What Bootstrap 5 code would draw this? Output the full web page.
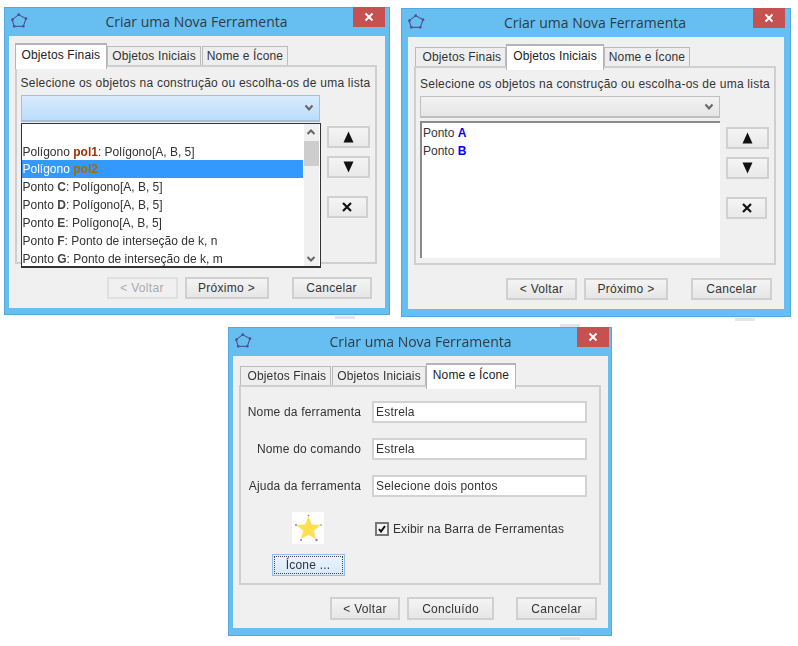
<!DOCTYPE html>
<html lang="en">

<head>
    <meta charset="UTF-8">
    <meta name="viewport" content="width=device-width, initial-scale=1.0">
    <title>Criar uma Nova Ferramenta</title>
    <link href="https://cdn.jsdelivr.net/npm/bootstrap@5.3.0/dist/css/bootstrap.min.css" rel="stylesheet">
    <style>
        body {
            background-color: #fff;
            font-family: "Liberation Sans", Arial, sans-serif;
            font-size: 12px;
            letter-spacing: .2px;
            color: #333;
        }

        .desk {
            position: relative;
            width: 798px;
            height: 646px;
            overflow: hidden;
            filter: blur(.3px);
        }

        .tool-win {
            position: absolute;
            background: #67bff1;
            border: 1px solid #55a8dc;
        }

        #win1 { left: 4px; top: 7px; width: 386px; height: 308px; }
        #win2 { left: 401px; top: 8px; width: 390px; height: 309px; }
        #win3 { left: 228px; top: 327px; width: 384px; height: 309px; }

        #win1 .win-client { margin-left: 3.5px; }
        #win2 .win-client { margin-left: 6px; }
        #win3 .win-client { margin-left: 4px; width: 375px; }

        /* restos de outras janelas atras das capturas */
        .tick-mark {
            position: absolute;
            width: 20px;
            height: 3px;
            background: #e4e4e4;
        }

        #tick1 { left: 335px; top: 316px; }
        #tick2 { left: 735px; top: 318px; }
        #tick3 { left: 560px; top: 324px; }
        #tick4 { left: 560px; top: 637px; }

        .win-title {
            height: 28px;
        }

        .win-icon {
            margin: 5px 0 0 6px;
        }

        .win-name {
            font-family: "Open Sans", sans-serif;
            font-size: 14px;
            letter-spacing: 0;
            line-height: 28px;
            color: #2f3c45;
            padding: 0 6px 0 17px;
        }

        .win-close {
            width: 32px;
            height: 20px;
            margin-right: 4px;
            margin-top: -1px;
            background: #c75050;
        }

        #win2 .win-close { margin-right: 5px; }
        #win3 .win-close { margin-right: 2px; }

        .win-client {
            width: 376px;
            height: 272px;
            background: #f0f0f0;
            padding-top: 7px;
        }

        .tool-tabs {
            border: 0;
            padding-left: 1px;
            height: 22px;
            align-items: flex-end;
            margin-left: 6px;
            flex-wrap: nowrap;
        }

        .tool-tabs .nav-link {
            height: 19px;
            padding: 0 4px;
            margin: 0 1px 0 0;
            line-height: 19px;
            letter-spacing: .14px;
            color: #333;
            background: #eee;
            border: 1px solid #bbb;
            border-bottom: 0;
            border-radius: 0;
            white-space: nowrap;
        }

        .tool-tabs .nav-item:first-child .nav-link:not(.active) {
            padding-left: 6.5px;
        }

        .tool-tabs .nav-link.active {
            height: 26px;
            padding: 2px 6px 0;
            margin: 0 0 -4px -1px;
            line-height: 17px;
            color: #222;
            background: #fff;
            position: relative;
            z-index: 2;
            border-color: #b4b4b4;
            border-width: 2px 1px 0;
        }

        .tab-box {
            margin-left: 6px;
            width: 362px;
            height: 199px;
            border: 2px solid #cfcfcf;
            padding: 8px 4px 0;
        }

        .pick-label {
            height: 16px;
            line-height: 16px;
            margin-bottom: 4px;
            letter-spacing: .235px;
            white-space: nowrap;
        }

        .pick-col {
            width: 299.5px;
            position: relative;
        }

        .pick-combo {
            height: 22px;
            border: 1px solid #c0c0c0;
            border-width: 1px 1px 2px;
            background: linear-gradient(#f2f2f2, #e6e6e6);
            padding-right: 5px;
        }

        #win1 .pick-combo {
            height: 27px;
            background: linear-gradient(#d9ebfc, #bcdcfb);
            border-color: #a9bfd4;
        }

        .pick-drop {
            position: absolute;
            top: 28px;
            left: 0;
            width: 300px;
            height: 145px;
            border: 1px solid #333;
            border-width: 1px 1px 2px;
            background: #fff;
            z-index: 3;
        }

        .drop-rows {
            padding: 1px 0 0;
            flex: 1;
            min-width: 0;
        }

        .drop-rows .list-group-item {
            height: 18px;
            line-height: 18px;
            padding: 0 1px;
            border: 0;
            border-radius: 0;
            background: transparent;
            color: #333;
            letter-spacing: 0;
            white-space: nowrap;
        }

        .drop-rows .list-group-item.active {
            background: #3399ff;
            color: #fff;
            width: 281px;
        }

        .drop-rows b { color: #444; }
        .drop-rows .obj-red { color: #993300; }
        .drop-rows .obj-brown { color: #a86a00; }

        .drop-scroll {
            width: 15px;
            background: #f0f0f0;
            margin-right: 1px;
        }

        .scroll-thumb {
            height: 25px;
            background: #cdcdcd;
            margin-top: 2px;
        }

        .scroll-arrow {
            height: 15px;
        }

        .pick-list {
            margin-top: 3px;
            height: 137px;
            background: #fff;
            border-left: 2px solid #8a8a8a;
            border-top: 2px solid #8a8a8a;
            padding: 1px 0 0 1px;
        }

        .pick-list .list-group-item {
            height: 18px;
            line-height: 18px;
            padding: 0;
            border: 0;
            background: transparent;
            color: #333;
            letter-spacing: 0;
        }

        .pick-list b { color: #0000ff; }

        .move-col {
            margin: 31px 0 0 6.5px;
        }

        .move-btn {
            width: 43px;
            height: 22px;
            padding: 0;
            border: 2px solid #d0d0d0;
            border-radius: 0;
            background: linear-gradient(#f4f4f4, #e9e9e9);
            margin-bottom: 8px;
            display: flex;
            align-items: center;
            justify-content: center;
        }

        .move-btn.del-btn {
            width: 41px;
            margin-top: 18px;
        }

        .win-foot {
            margin-top: 13px;
            padding-right: 13px;
        }

        #win2 .win-foot { padding-right: 12px; }
        #win2 .w-cancel { width: 81px; }

        #win3 .win-foot {
            margin-top: 12px;
            padding-right: 11px;
        }

        #win3 .foot-btn { height: 23px; }
        #win3 .w-back { width: 70px; }
        #win3 .w-cancel { width: 81px; }

        .foot-btn {
            height: 22px;
            padding: 0;
            font-size: 12px;
            letter-spacing: .3px;
            line-height: 18px;
            color: #333;
            border: 2px solid #d0d0d0;
            border-radius: 0;
            background: linear-gradient(#f4f4f4, #e6e6e6);
        }

        .foot-btn:disabled {
            color: #aaa;
            opacity: 1;
            border-color: #e0e0e0;
            background: #f0f0f0;
        }

        .w-back { width: 71px; margin-right: 7px; }
        .w-next { width: 84px; margin-right: 23px; }
        .w-done { width: 87px; margin-right: 22px; }
        .w-cancel { width: 80px; }

        .name-row {
            height: 22px;
            margin-bottom: 15px;
        }

        .name-label {
            width: 120px;
            margin-right: 11px;
            text-align: right;
            letter-spacing: .18px;
            white-space: nowrap;
        }

        .name-input {
            width: 214.5px;
            height: 22px;
            padding: 0 2px;
            font-size: 12px;
            letter-spacing: .2px;
            color: #333;
            border: 2px solid #d2d2d2;
            border-radius: 0;
            background: #fff;
        }

        .tab-box.name-box {
            height: 200px;
            padding: 14px 0 0;
        }

        .icon-col {
            width: 134px;
        }

        .star-box {
            width: 32px;
            height: 32px;
            background: #fff;
            margin-bottom: 10px;
        }

        .icon-btn {
            width: 73px;
            height: 22px;
            padding: 0;
            font-size: 12px;
            letter-spacing: .2px;
            line-height: 18px;
            color: #333;
            border: 1px solid #8fbfee;
            border-radius: 0;
            background: linear-gradient(#e9f3fd, #d9e9f9);
            outline: 1px dotted #444;
            outline-offset: -3px;
        }

        .show-check {
            margin: 10px 0 0 0;
            padding: 0;
            min-height: 0;
            gap: 4px;
        }

        .show-check .form-check-input {
            float: none;
            width: 14px;
            height: 14px;
            margin: 0;
            border: 2px solid #777;
            border-radius: 0;
            background-color: #f4f4f4;
        }

        .show-check .form-check-input:checked {
            background-color: #f4f4f4;
            border-color: #777;
            background-image: url("data:image/svg+xml,%3csvg xmlns='http://www.w3.org/2000/svg' viewBox='0 0 20 20'%3e%3cpath fill='none' stroke='%23111' stroke-width='4' d='M4 10l4 5 8-11'/%3e%3c/svg%3e");
        }

        .show-check .form-check-label {
            line-height: 14px;
            letter-spacing: .12px;
            white-space: nowrap;
        }
    </style>
</head>

<body>

    <div class="desk">

        <div class="tick-mark" id="tick1"></div>
        <div class="tick-mark" id="tick2"></div>
        <div class="tick-mark" id="tick3"></div>
        <div class="tick-mark" id="tick4"></div>

        <!-- janela 1 -->
        <div class="tool-win" id="win1">
            <div class="win-title d-flex">
                <svg class="win-icon" width="18" height="16" viewBox="0 0 18 16"><path d="M7.700 1.700L15 5.700 12.300 13.300H3.300L1 6.700Z" fill="none" stroke="#4a4a5a" stroke-width="1"/><g fill="#5a4ab0"><circle cx="7.700" cy="1.700" r="1.400"/><circle cx="15" cy="5.700" r="1.400"/><circle cx="12.300" cy="13.300" r="1.400"/><circle cx="3.300" cy="13.300" r="1.400"/><circle cx="1.500" cy="6.700" r="1.400"/></g></svg>
                <div class="win-name flex-grow-1 text-center">Criar uma Nova Ferramenta</div>
                <div class="win-close d-flex align-items-center justify-content-center"><svg width="10" height="10" viewBox="0 0 10 10"><path d="M1.500 1.500L8.500 8.500M8.500 1.500L1.500 8.500" stroke="#fff" stroke-width="2"/></svg></div>
            </div>
            <div class="win-client">
                <ul class="nav nav-tabs tool-tabs">
                    <li class="nav-item"><a class="nav-link active" href="#">Objetos Finais</a></li>
                    <li class="nav-item"><a class="nav-link" href="#">Objetos Iniciais</a></li>
                    <li class="nav-item"><a class="nav-link" href="#">Nome e Ícone</a></li>
                </ul>
                <div class="tab-box">
                    <div class="pick-label">Selecione os objetos na construção ou escolha-os de uma lista</div>
                    <div class="d-flex">
                        <div class="pick-col">
                            <div class="pick-combo d-flex align-items-center justify-content-end">
                                <svg width="10" height="8" viewBox="0 0 10 8"><path d="M1.500 1.500L5 5.500 8.500 1.500" fill="none" stroke="#666" stroke-width="2"/></svg>
                            </div>
                            <div class="pick-drop d-flex">
                                <ul class="list-group drop-rows">
                                    <li class="list-group-item">&nbsp;</li>
                                    <li class="list-group-item">Polígono <b class="obj-red">pol1</b>: Polígono[A, B, 5]</li>
                                    <li class="list-group-item active">Polígono <b class="obj-brown">pol2</b></li>
                                    <li class="list-group-item">Ponto <b>C</b>: Polígono[A, B, 5]</li>
                                    <li class="list-group-item">Ponto <b>D</b>: Polígono[A, B, 5]</li>
                                    <li class="list-group-item">Ponto <b>E</b>: Polígono[A, B, 5]</li>
                                    <li class="list-group-item">Ponto <b>F</b>: Ponto de interseção de k, n</li>
                                    <li class="list-group-item">Ponto <b>G</b>: Ponto de interseção de k, m</li>
                                </ul>
                                <div class="drop-scroll d-flex flex-column">
                                    <div class="scroll-arrow d-flex align-items-center justify-content-center"><svg width="10" height="8" viewBox="0 0 10 8"><path d="M1.500 6L5 2.500 8.500 6" fill="none" stroke="#666" stroke-width="2"/></svg></div>
                                    <div class="scroll-thumb"></div>
                                    <div class="scroll-arrow mt-auto d-flex align-items-center justify-content-center"><svg width="10" height="8" viewBox="0 0 10 8"><path d="M1.500 2L5 5.500 8.500 2" fill="none" stroke="#666" stroke-width="2"/></svg></div>
                                </div>
                            </div>
                        </div>
                        <div class="move-col">
                            <button class="btn move-btn" type="button"><svg width="11" height="12" viewBox="0 0 11 12"><path d="M5.500 0.500L10.500 11.500H0.500Z" fill="#111"/></svg></button>
                            <button class="btn move-btn" type="button"><svg width="11" height="12" viewBox="0 0 11 12"><path d="M5.500 11.500L10.500 0.500H0.500Z" fill="#111"/></svg></button>
                            <button class="btn move-btn del-btn" type="button"><svg width="10" height="10" viewBox="0 0 10 10"><path d="M1 1L9 9M9 1L1 9" stroke="#111" stroke-width="2.200"/></svg></button>
                        </div>
                    </div>
                </div>
                <div class="win-foot d-flex justify-content-end">
                    <button class="btn foot-btn w-back" type="button" disabled>&lt; Voltar</button>
                    <button class="btn foot-btn w-next" type="button">Próximo &gt;</button>
                    <button class="btn foot-btn w-cancel" type="button">Cancelar</button>
                </div>
            </div>
        </div>

        <!-- janela 2 -->
        <div class="tool-win" id="win2">
            <div class="win-title d-flex">
                <svg class="win-icon" width="18" height="16" viewBox="0 0 18 16"><path d="M7.700 1.700L15 5.700 12.300 13.300H3.300L1 6.700Z" fill="none" stroke="#4a4a5a" stroke-width="1"/><g fill="#5a4ab0"><circle cx="7.700" cy="1.700" r="1.400"/><circle cx="15" cy="5.700" r="1.400"/><circle cx="12.300" cy="13.300" r="1.400"/><circle cx="3.300" cy="13.300" r="1.400"/><circle cx="1.500" cy="6.700" r="1.400"/></g></svg>
                <div class="win-name flex-grow-1 text-center">Criar uma Nova Ferramenta</div>
                <div class="win-close d-flex align-items-center justify-content-center"><svg width="10" height="10" viewBox="0 0 10 10"><path d="M1.500 1.500L8.500 8.500M8.500 1.500L1.500 8.500" stroke="#fff" stroke-width="2"/></svg></div>
            </div>
            <div class="win-client">
                <ul class="nav nav-tabs tool-tabs">
                    <li class="nav-item"><a class="nav-link" href="#">Objetos Finais</a></li>
                    <li class="nav-item"><a class="nav-link active" href="#">Objetos Iniciais</a></li>
                    <li class="nav-item"><a class="nav-link" href="#">Nome e Ícone</a></li>
                </ul>
                <div class="tab-box">
                    <div class="pick-label">Selecione os objetos na construção ou escolha-os de uma lista</div>
                    <div class="d-flex">
                        <div class="pick-col">
                            <div class="pick-combo d-flex align-items-center justify-content-end">
                                <svg width="10" height="8" viewBox="0 0 10 8"><path d="M1.500 1.500L5 5.500 8.500 1.500" fill="none" stroke="#666" stroke-width="2"/></svg>
                            </div>
                            <ul class="list-group pick-list rounded-0">
                                <li class="list-group-item">Ponto <b>A</b></li>
                                <li class="list-group-item">Ponto <b>B</b></li>
                            </ul>
                        </div>
                        <div class="move-col">
                            <button class="btn move-btn" type="button"><svg width="11" height="12" viewBox="0 0 11 12"><path d="M5.500 0.500L10.500 11.500H0.500Z" fill="#111"/></svg></button>
                            <button class="btn move-btn" type="button"><svg width="11" height="12" viewBox="0 0 11 12"><path d="M5.500 11.500L10.500 0.500H0.500Z" fill="#111"/></svg></button>
                            <button class="btn move-btn del-btn" type="button"><svg width="10" height="10" viewBox="0 0 10 10"><path d="M1 1L9 9M9 1L1 9" stroke="#111" stroke-width="2.200"/></svg></button>
                        </div>
                    </div>
                </div>
                <div class="win-foot d-flex justify-content-end">
                    <button class="btn foot-btn w-back" type="button">&lt; Voltar</button>
                    <button class="btn foot-btn w-next" type="button">Próximo &gt;</button>
                    <button class="btn foot-btn w-cancel" type="button">Cancelar</button>
                </div>
            </div>
        </div>

        <!-- janela 3 -->
        <div class="tool-win" id="win3">
            <div class="win-title d-flex">
                <svg class="win-icon" width="18" height="16" viewBox="0 0 18 16"><path d="M7.700 1.700L15 5.700 12.300 13.300H3.300L1 6.700Z" fill="none" stroke="#4a4a5a" stroke-width="1"/><g fill="#5a4ab0"><circle cx="7.700" cy="1.700" r="1.400"/><circle cx="15" cy="5.700" r="1.400"/><circle cx="12.300" cy="13.300" r="1.400"/><circle cx="3.300" cy="13.300" r="1.400"/><circle cx="1.500" cy="6.700" r="1.400"/></g></svg>
                <div class="win-name flex-grow-1 text-center">Criar uma Nova Ferramenta</div>
                <div class="win-close d-flex align-items-center justify-content-center"><svg width="10" height="10" viewBox="0 0 10 10"><path d="M1.500 1.500L8.500 8.500M8.500 1.500L1.500 8.500" stroke="#fff" stroke-width="2"/></svg></div>
            </div>
            <div class="win-client">
                <ul class="nav nav-tabs tool-tabs">
                    <li class="nav-item"><a class="nav-link" href="#">Objetos Finais</a></li>
                    <li class="nav-item"><a class="nav-link" href="#">Objetos Iniciais</a></li>
                    <li class="nav-item"><a class="nav-link active" href="#">Nome e Ícone</a></li>
                </ul>
                <div class="tab-box name-box">
                    <div class="name-row d-flex align-items-center">
                        <label class="name-label" for="toolName">Nome da ferramenta</label>
                        <input class="form-control name-input" id="toolName" type="text" value="Estrela">
                    </div>
                    <div class="name-row d-flex align-items-center">
                        <label class="name-label" for="cmdName">Nome do comando</label>
                        <input class="form-control name-input" id="cmdName" type="text" value="Estrela">
                    </div>
                    <div class="name-row d-flex align-items-center">
                        <label class="name-label" for="toolHelp">Ajuda da ferramenta</label>
                        <input class="form-control name-input" id="toolHelp" type="text" value="Selecione dois pontos">
                    </div>
                    <div class="d-flex">
                        <div class="icon-col d-flex flex-column align-items-center">
                            <div class="star-box">
                                <svg width="32" height="32" viewBox="0 0 32 32"><path d="M16.500 4L19.800 12.500 28.500 13 21.800 19 24.300 27.500 16.500 22.800 8.700 27.500 11.200 19 4.500 13 13.200 12.500Z" fill="#ffe050"/><g fill="#8a78d8"><circle cx="9" cy="28" r="1"/><circle cx="24.500" cy="28" r="1.200"/></g><g fill="#777"><circle cx="16.500" cy="3.500" r=".8"/><circle cx="4" cy="13" r=".9"/><circle cx="29" cy="13" r=".8"/></g></svg>
                            </div>
                            <button class="btn icon-btn" type="button">Ícone ...</button>
                        </div>
                        <div class="form-check show-check d-flex align-items-start">
                            <input class="form-check-input" type="checkbox" id="showBar" checked>
                            <label class="form-check-label" for="showBar">Exibir na Barra de Ferramentas</label>
                        </div>
                    </div>
                </div>
                <div class="win-foot d-flex justify-content-end">
                    <button class="btn foot-btn w-back" type="button">&lt; Voltar</button>
                    <button class="btn foot-btn w-done" type="button">Concluído</button>
                    <button class="btn foot-btn w-cancel" type="button">Cancelar</button>
                </div>
            </div>
        </div>

    </div>

    <script src="https://cdn.jsdelivr.net/npm/bootstrap@5.3.0/dist/js/bootstrap.bundle.min.js"></script>
</body>

</html>
